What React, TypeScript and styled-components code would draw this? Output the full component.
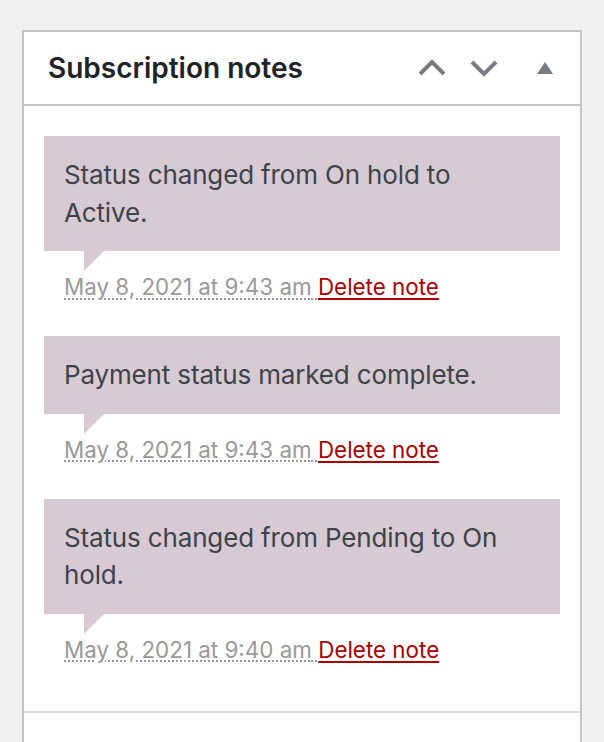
import React from "react";
import styled, { createGlobalStyle } from "styled-components";

const GlobalStyle = createGlobalStyle`
  html, body {
    margin: 0;
    padding: 0;
    background: #f0f0f1;
  }
  body {
    font-family: Inter, "Noto Sans", "Liberation Sans", sans-serif;
    -webkit-font-smoothing: antialiased;
  }
`;

const Panel = styled.section`
  margin: 30px 22px 0 22px;
  background: #ffffff;
  border: 2px solid #c3c4c7;
  border-bottom: none;
`;

const Header = styled.header`
  display: flex;
  align-items: center;
  height: 72px;
  border-bottom: 2px solid #c3c4c7;
`;

const Title = styled.h2`
  flex: 1;
  margin: 0;
  padding-left: 24px;
  font-size: 28px;
  font-weight: 600;
  color: #1d2327;
`;

const HeaderButton = styled.button<{ $w: number }>`
  width: ${(p) => p.$w}px;
  height: 72px;
  padding: 0;
  border: none;
  background: transparent;
  display: flex;
  align-items: center;
  justify-content: center;
  color: #787c82;
  cursor: pointer;
`;

const Body = styled.div`
  padding: 30px 20px 12px;
`;

const NoteList = styled.ul`
  list-style: none;
  margin: 0;
  padding: 0;
`;

const NoteItem = styled.li`
  margin: 0 0 13px;
`;

const NoteContent = styled.div`
  position: relative;
  background: #d7cad2;
  padding: 20px 26px 20px 20px;
  font-size: 26px;
  line-height: 37.5px;
  letter-spacing: -0.15px;
  color: #3c434a;

  &::after {
    content: "";
    position: absolute;
    bottom: -20px;
    left: 40px;
    width: 0;
    height: 0;
    border-style: solid;
    border-width: 20px 20px 0 0;
    border-color: #d7cad2 transparent;
  }
`;

const NoteText = styled.p`
  margin: 0;
  padding: 0;
`;

const Meta = styled.p`
  margin: 0;
  padding: 20px;
  font-size: 22.4px;
  line-height: 32px;
  color: #999999;
`;

const ExactDate = styled.abbr`
  text-decoration: underline dotted;
  text-decoration-thickness: 2px;
  text-underline-offset: 3px;
  cursor: help;
`;

const DeleteLink = styled.a`
  color: #a00;
  text-decoration: underline;
  text-decoration-thickness: 2px;
  text-underline-offset: 3px;
`;

const Divider = styled.div`
  border-top: 2px solid #dcdcde;
  height: 80px;
`;

const ChevronUp = () => (
  <svg width="28" height="18" viewBox="0 0 28 18" aria-hidden="true">
    <path d="M2 15 L14 3 L26 15" fill="none" stroke="currentColor" strokeWidth="4" />
  </svg>
);

const ChevronDown = () => (
  <svg width="28" height="18" viewBox="0 0 28 18" aria-hidden="true">
    <path d="M2 3 L14 15 L26 3" fill="none" stroke="currentColor" strokeWidth="4" />
  </svg>
);

const Triangle = () => (
  <svg width="16" height="12" viewBox="0 0 16 12" aria-hidden="true">
    <path d="M8 0 L16 12 L0 12 Z" fill="currentColor" />
  </svg>
);

const notes = [
  { text: "Status changed from On hold to Active.", date: "May 8, 2021 at 9:43 am" },
  { text: "Payment status marked complete.", date: "May 8, 2021 at 9:43 am" },
  { text: "Status changed from Pending to On hold.", date: "May 8, 2021 at 9:40 am" },
];

export default function App() {
  return (
    <>
      <GlobalStyle />
      <Panel>
        <Header>
          <Title>Subscription notes</Title>
          <HeaderButton $w={52} aria-label="Move up">
            <ChevronUp />
          </HeaderButton>
          <HeaderButton $w={52} aria-label="Move down">
            <ChevronDown />
          </HeaderButton>
          <HeaderButton $w={70} aria-label="Toggle panel">
            <Triangle />
          </HeaderButton>
        </Header>
        <Body>
          <NoteList>
            {notes.map((n, i) => (
              <NoteItem key={i}>
                <NoteContent>
                  <NoteText>{n.text}</NoteText>
                </NoteContent>
                <Meta>
                  <ExactDate title={n.date}>{n.date} </ExactDate>
                  <DeleteLink href="#">Delete note</DeleteLink>
                </Meta>
              </NoteItem>
            ))}
          </NoteList>
        </Body>
        <Divider />
      </Panel>
    </>
  );
}
